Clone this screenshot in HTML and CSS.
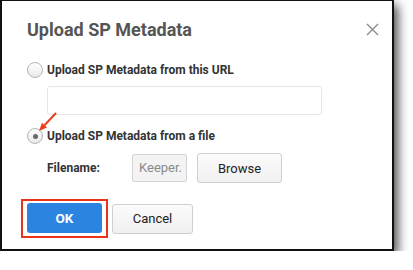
FILE: index.html
```html
<!DOCTYPE html>
<html>
<head>
<meta charset="utf-8">
<link rel="stylesheet" href="styles.css">
</head>
<body>
<div class="dialog">
  <div class="header">
    <h1 class="title">Upload SP Metadata</h1>
    <svg class="close" width="13" height="13" viewBox="0 0 13 13"><path d="M1 1L12 12M12 1L1 12" stroke="#8c8c8c" stroke-width="1.4" fill="none"/></svg>
  </div>
  <div class="option">
    <span class="radio"></span>
    <span class="label">Upload SP Metadata from this URL</span>
  </div>
  <div class="url-input"></div>
  <div class="option option-file">
    <span class="radio checked"><span class="dot"></span></span>
    <span class="label">Upload SP Metadata from a file</span>
    <svg class="arrow" width="20" height="20" viewBox="0 0 20 20"><path d="M18 1L6.5 13.2" stroke="#e8401f" stroke-width="2" fill="none"/><path d="M1 19L4 10.8L9 15.6Z" fill="#e8401f"/></svg>
  </div>
  <div class="file-row">
    <span class="file-label">Filename:</span>
    <span class="file-input">Keeper.</span>
    <span class="btn btn-browse">Browse</span>
  </div>
  <div class="actions">
    <span class="ok-outline"><span class="btn btn-ok">OK</span></span>
    <span class="btn btn-cancel">Cancel</span>
  </div>
</div>
</body>
</html>
```
FILE: styles.css
```css
html, body {
  margin: 0;
  padding: 0;
  background: #fff;
}
body {
  font-family: Roboto, "Liberation Sans", sans-serif;
}
.dialog {
  box-sizing: border-box;
  width: 394px;
  height: 251px;
  border: 2px solid #111;
  border-top-width: 1px;
  background: #fff;
  box-shadow: 4px 5px 10px rgba(0,0,0,0.7);
  padding: 0 0 0 25px;
  position: relative;
}
.header {
  display: flex;
  align-items: center;
  justify-content: space-between;
  height: 21px;
  padding-top: 18px;
  padding-right: 13px;
}
.title {
  margin: 0;
  font-size: 18px;
  line-height: 21px;
  font-weight: 700;
  color: #555;
}
.close {
  display: block;
}
.option {
  display: flex;
  align-items: center;
  margin-top: 22px;
  height: 16px;
  position: relative;
}
.radio {
  box-sizing: border-box;
  width: 16px;
  height: 16px;
  border-radius: 50%;
  border: 1px solid #b5b5b5;
  background: linear-gradient(#ffffff, #e9e9e9);
  display: flex;
  align-items: center;
  justify-content: center;
  flex: none;
}
.dot {
  width: 5px;
  height: 5px;
  border-radius: 50%;
  background: #6a6a6a;
}
.label {
  margin-left: 4px;
  font-size: 12px;
  font-weight: 700;
  color: #333;
}
.url-input {
  box-sizing: border-box;
  margin: 8px 0 0 20px;
  width: 275px;
  height: 29px;
  border: 1px solid #e6e6e6;
  border-radius: 3px;
}
.option-file {
  margin-top: 13px;
}
.arrow {
  position: absolute;
  left: 11px;
  top: -16px;
}
.file-row {
  display: flex;
  align-items: center;
  margin: 9px 0 0 20px;
  height: 30px;
}
.file-label {
  width: 85px;
  font-size: 12px;
  font-weight: 700;
  color: #333;
}
.file-input {
  box-sizing: border-box;
  width: 55px;
  height: 28px;
  border: 1px solid #d4d4d4;
  border-radius: 2px;
  background: #f3f3f3;
  color: #8a8a8a;
  font-size: 13px;
  line-height: 26px;
  padding-left: 6px;
  overflow: hidden;
  white-space: nowrap;
}
.btn {
  box-sizing: border-box;
  display: flex;
  align-items: center;
  justify-content: center;
  border-radius: 3px;
  font-size: 13px;
}
.btn-browse {
  margin-left: 10px;
  width: 85px;
  height: 30px;
  border: 1px solid #cfcfcf;
  background: linear-gradient(#fbfbfb, #f0f0f0);
  color: #222;
}
.actions {
  display: flex;
  align-items: center;
  margin-top: 16px;
  margin-left: -6px;
}
.ok-outline {
  box-sizing: border-box;
  border: 2px solid #e8341c;
  padding: 2px 4px 3px 4px;
  display: block;
}
.btn-ok {
  width: 75px;
  height: 30px;
  background: #2b84e0;
  color: #fff;
  font-weight: 700;
  font-size: 13.5px;
  border-radius: 3px;
}
.btn-cancel {
  margin-left: 4px;
  width: 81px;
  height: 30px;
  border: 1px solid #cfcfcf;
  background: linear-gradient(#fbfbfb, #f0f0f0);
  color: #222;
}
```
